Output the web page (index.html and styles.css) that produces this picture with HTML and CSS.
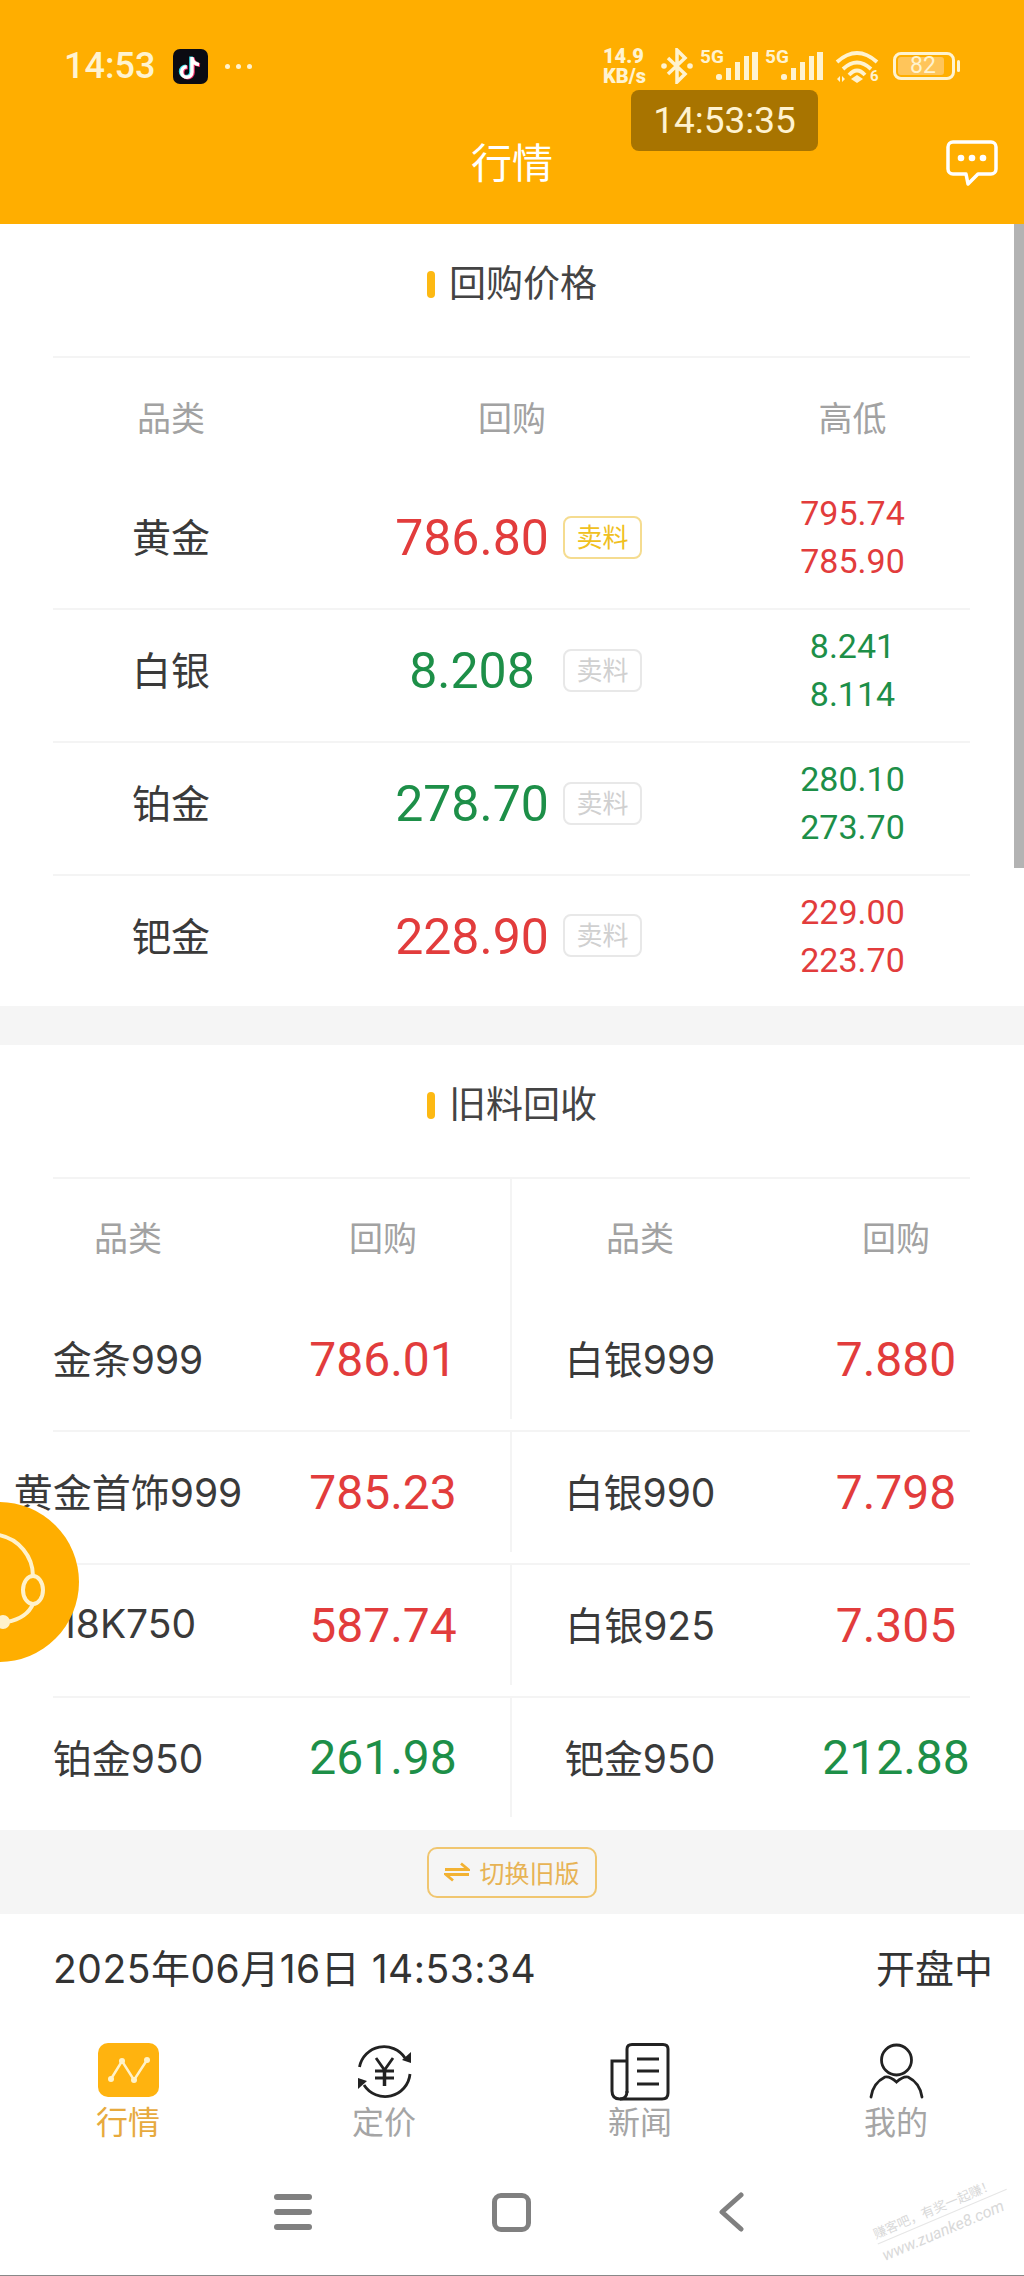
FILE: index.html
```html
<!DOCTYPE html>
<html lang="zh">
<head>
<meta charset="utf-8">
<title>行情</title>
<link rel="stylesheet" href="styles.css">
</head>
<body>
<div class="page">
  <header class="header">
    <div class="status">
      <span class="clock">14:53</span>
      <svg class="tiktok" viewBox="0 0 35 35">
        <rect width="35" height="35" rx="7" fill="#0b0b12"/>
        <path d="M19 8V23a5.2 5.2 0 1 1-5.2-5.2M19 9q1 6 7 6.500" fill="none" stroke="#38e0ea" stroke-width="3.600" transform="translate(-1 -.6)"/>
        <path d="M19 8V23a5.200 5.200 0 1 1-5.200-5.200M19 9q1 6 7 6.500" fill="none" stroke="#f5306a" stroke-width="3.600" transform="translate(1 .6)"/>
        <path d="M19 8V23a5.200 5.200 0 1 1-5.200-5.200M19 9q1 6 7 6.500" fill="none" stroke="#fff" stroke-width="3.400"/>
      </svg>
      <span class="dots"><i></i><i></i><i></i></span>
      <div class="status-right">
        <span class="speed"><b>14.9</b><b>KB/s</b></span>
        <svg class="bt" viewBox="0 0 33 36" fill="none" stroke="#fff3d0" stroke-width="3.500">
          <path d="M8 10 25 26 17 34V2L25 10 8 26"/>
          <circle cx="4" cy="18" r="2.800" fill="#fff3d0" stroke="none"/>
          <circle cx="30" cy="18" r="2.800" fill="#fff3d0" stroke="none"/>
        </svg>
        <div class="signal">
          <span class="sig-text">5G</span>
          <svg class="bars" viewBox="0 0 42 36">
            <g fill="#fff3d0"><rect x="0" y="26" width="6" height="6" rx="2.500"/><rect x="10" y="20" width="5" height="12"/><rect x="19" y="14" width="5" height="18"/><rect x="28" y="8" width="5" height="24"/><rect x="36" y="4" width="6" height="28"/></g>
          </svg>
        </div>
        <div class="signal">
          <span class="sig-text">5G</span>
          <svg class="bars" viewBox="0 0 42 36">
            <g fill="#fff3d0"><rect x="0" y="26" width="6" height="6" rx="2.500"/><rect x="10" y="20" width="5" height="12"/><rect x="19" y="14" width="5" height="18"/><rect x="28" y="8" width="5" height="24"/><rect x="36" y="4" width="6" height="28"/></g>
          </svg>
        </div>
        <div class="wifi">
          <svg class="wifi-arcs" viewBox="0 0 44 36" fill="none" stroke="#fff3d0" stroke-width="3.800">
            <path d="M2 14Q22-4 42 14M8 21Q22 8 36 21M14 27Q22 18 30 27"/>
            <path d="M16 31 22 27 28 31 22 35z" fill="#fff3d0" stroke="none"/>
            <path d="M2 31l3-3v6zM7 28l3 3-3 3z" fill="#fff3d0" stroke="none"/>
          </svg>
          <span class="wifi-text">6</span>
        </div>
        <div class="battery"><div class="battery-body"><span class="battery-fill">82</span></div><i class="battery-cap"></i></div>
      </div>
    </div>
    <div class="titlebar">
      <span></span>
      <h1 class="title">行情</h1>
      <svg class="chat" viewBox="0 0 52 46" fill="none" stroke="#fff" stroke-width="3.500" stroke-linejoin="round">
        <path d="M7 2H45a5 5 0 0 1 5 5V29a5 5 0 0 1-5 5H32L22 44 20 34H7a5 5 0 0 1-5-5V7a5 5 0 0 1 5-5z"/>
        <g fill="#fff" stroke="none"><circle cx="15" cy="18" r="3.300"/><circle cx="26" cy="18" r="3.300"/><circle cx="37" cy="18" r="3.300"/></g>
      </svg>
    </div>
    <div class="toast">14:53:35</div>
  </header>

  <section class="panel">
    <div class="section-title"><i class="section-bar"></i><h2>回购价格</h2></div>
    <div class="table">
      <div class="row3 head"><div>品类</div><div>回购</div><div>高低</div></div>
      <div class="row3 line">
        <div class="name">黄金</div>
        <div class="buy"><span class="price red">786.80</span><span class="tag active">卖料</span></div>
        <div class="range red"><span>795.74</span><span>785.90</span></div>
      </div>
      <div class="row3 line">
        <div class="name">白银</div>
        <div class="buy"><span class="price green">8.208</span><span class="tag">卖料</span></div>
        <div class="range green"><span>8.241</span><span>8.114</span></div>
      </div>
      <div class="row3 line">
        <div class="name">铂金</div>
        <div class="buy"><span class="price green">278.70</span><span class="tag">卖料</span></div>
        <div class="range green"><span>280.10</span><span>273.70</span></div>
      </div>
      <div class="row3 last">
        <div class="name">钯金</div>
        <div class="buy"><span class="price red">228.90</span><span class="tag">卖料</span></div>
        <div class="range red"><span>229.00</span><span>223.70</span></div>
      </div>
    </div>
  </section>

  <div class="gap"></div>

  <section class="panel">
    <div class="section-title"><i class="section-bar"></i><h2>旧料回收</h2></div>
    <div class="table">
      <div class="row4 head"><div>品类</div><div class="split">回购</div><div>品类</div><div>回购</div></div>
      <div class="row4 line">
        <div class="name">金条999</div><div class="split price2 red">786.01</div>
        <div class="name">白银999</div><div class="price2 red">7.880</div>
      </div>
      <div class="row4 line">
        <div class="name">黄金首饰999</div><div class="split price2 red">785.23</div>
        <div class="name">白银990</div><div class="price2 red">7.798</div>
      </div>
      <div class="row4 line">
        <div class="name">18K750</div><div class="split price2 red">587.74</div>
        <div class="name">白银925</div><div class="price2 red">7.305</div>
      </div>
      <div class="row4 last">
        <div class="name">铂金950</div><div class="split price2 green">261.98</div>
        <div class="name">钯金950</div><div class="price2 green">212.88</div>
      </div>
    </div>
  </section>

  <div class="switch-band">
    <div class="switch">
      <svg class="switch-icon" viewBox="0 0 26 20" fill="none" stroke="#f2b233" stroke-width="2.800">
        <path d="M1 7.500H24L17 1.500M25 12.500H2L9 18.500"/>
      </svg>
      <span>切换旧版</span>
    </div>
  </div>

  <div class="footer"><span class="footer-date">2025年06月16日 14:53:34</span><span>开盘中</span></div>

  <nav class="tabs">
    <div class="tab current">
      <svg class="tab-icon" viewBox="0 0 61 58">
        <rect width="61" height="54" rx="10" fill="#ffb30f"/>
        <path d="M13 36 24 18 36 37 49 17" fill="none" stroke="#fff2c8" stroke-width="2.500"/>
        <g fill="#fff2c8"><circle cx="13" cy="36" r="3"/><circle cx="24" cy="18" r="3"/><circle cx="36" cy="37" r="3"/><circle cx="49" cy="17" r="3"/></g>
      </svg>
      <span>行情</span>
    </div>
    <div class="tab">
      <svg class="tab-icon" viewBox="0 0 61 58" fill="none" stroke="#222" stroke-width="2.800">
        <path d="M5.500 24A25 25 0 0 1 51 15"/>
        <path d="M56 31A25 25 0 0 1 10 42"/>
        <path d="M57 9V20L48 17zM4 46V35L13 38z" fill="#222" stroke="none"/>
        <path d="M22 15 30.500 27 39 15M21 28H40M21 35H40"/>
        <path d="M30.500 27V43" stroke-width="3.500"/>
      </svg>
      <span>定价</span>
    </div>
    <div class="tab">
      <svg class="tab-icon" viewBox="0 0 61 58" fill="none" stroke="#222" stroke-width="3">
        <path d="M17 50V6Q17 1.500 22 1.500H53Q58 1.500 58 6V50Q58 56 52 56H10"/>
        <path d="M17 18H2V48Q2 56 10 56 17 56 17 48"/>
        <path d="M27 16H49M27 28H49M27 41H49"/>
      </svg>
      <span>新闻</span>
    </div>
    <div class="tab">
      <svg class="tab-icon" viewBox="0 0 61 58" fill="none" stroke="#222" stroke-width="2.800">
        <circle cx="30.500" cy="17" r="15"/>
        <path d="M5 54Q7 40 19 34 24 33 30.500 39 37 33 42 34 54 40 56 54" stroke-linecap="round"/>
      </svg>
      <span>我的</span>
    </div>
  </nav>

  <div class="sysnav">
    <div class="menu-icon"><i></i><i></i><i></i></div>
    <div class="home-icon"></div>
    <svg class="back-icon" viewBox="0 0 26 40" fill="none" stroke="#808080" stroke-width="5" stroke-linecap="round" stroke-linejoin="round"><path d="M23 3 4 20 23 37"/></svg>
  </div>

  <div class="scrollbar"></div>
  <div class="support">
    <svg class="support-icon" viewBox="0 0 80 160" fill="none" stroke="#fff2cc" stroke-width="4">
      <path d="M0 33A42 42 0 0 1 34 74"/>
      <ellipse cx="34" cy="88" rx="10" ry="14"/>
      <path d="M34 102Q28 116 8 120"/>
      <circle cx="4" cy="120" r="7" fill="#fff2cc" stroke="none"/>
    </svg>
  </div>
  <div class="watermark"><span class="wm-top">赚客吧，有奖一起赚！</span><span class="wm-bottom">www.zuanke8.com</span></div>
</div>
</body>
</html>
```
FILE: styles.css
```css
* { box-sizing: border-box; }
html, body { margin: 0; padding: 0; background: #fff; }
body { font-family: Inter, "Noto Sans CJK SC", sans-serif; color: #3a3a3a; }
h1, h2 { margin: 0; font-weight: 400; }
.page { position: relative; width: 1024px; height: 2276px; overflow: hidden; border-bottom: 1px solid #888; }

.header { position: relative; height: 224px; background: #ffae00; padding-top: 48px; }
.status { display: flex; align-items: center; height: 36px; padding: 0 64px 0 64px; color: #fff3d0; }
.clock { font: 500 36px Roboto, sans-serif; width: 91px; }
.tiktok { width: 35px; height: 35px; margin-left: 18px; }
.dots { display: flex; gap: 6px; margin-left: 17px; }
.dots i { width: 5px; height: 5px; border-radius: 50%; background: #fff3d0; }
.status-right { display: flex; align-items: center; margin-left: auto; }
.speed { display: flex; flex-direction: column; width: 47px; font: 700 20px/20px Roboto, sans-serif; }
.speed b { white-space: nowrap; }
.bt { width: 33px; height: 36px; margin-left: 10px; }
.signal { display: flex; align-items: flex-start; width: 58px; height: 36px; margin-left: 7px; }
.sig-text { width: 16px; height: 18px; font: 700 19px/18px Roboto, sans-serif; white-space: nowrap; color: #fff3d0; }
.bars { width: 42px; height: 36px; }
.wifi { display: flex; align-items: flex-end; width: 44px; height: 36px; margin-left: 12px; }
.wifi-arcs { width: 44px; height: 36px; flex: none; }
.wifi-text { flex: none; width: 9px; margin-left: -9px; font: 700 15px/15px Roboto, sans-serif; color: #fff3d0; }
.battery { display: flex; align-items: center; margin-left: 14px; }
.battery-body { width: 62px; height: 28px; border: 3px solid #fff3d0; border-radius: 8px; padding: 2px; }
.battery-fill { display: block; width: 46px; height: 18px; border-radius: 3px; background: #ffc55a; font: 23px/18px Roboto, sans-serif; text-align: center; padding-left: 4px; color: #fff3d0; }
.battery-cap { width: 3px; height: 12px; margin-left: 2px; background: #fff3d0; border-radius: 2px; }
.titlebar { display: grid; grid-template-columns: 1fr auto 1fr; align-items: center; height: 80px; margin-top: 39px; padding: 0 26px; }
.title { font-size: 41px; line-height: 80px; color: #fff; }
.chat { width: 52px; height: 46px; justify-self: end; }
.toast { position: absolute; left: 631px; top: 90px; width: 187px; height: 61px; border-radius: 8px; background: #a87400; color: #fff3d0; font: 37px/61px Roboto, sans-serif; text-align: center; }

.section-title { display: flex; align-items: center; justify-content: center; gap: 14px; height: 120px; margin-bottom: 12px; }
.section-bar { width: 8px; height: 27px; border-radius: 4px; background: #fdb913; }
.section-title h2 { font-size: 37px; line-height: 120px; color: #444; }

.table { margin: 0 54px 0 53px; border-top: 2px solid #f4f4f4; }
.row3, .row4 { display: grid; text-align: center; }
.row3 { grid-template-columns: 236px 1fr 235px; }
.row4 { grid-template-columns: 203px 256px 256px 202px; }
.row4 > :first-child { margin-left: -53px; }
.row4 > :last-child { margin-right: -54px; }
.head { height: 119px; align-items: center; padding-bottom: 3px; font-size: 34px; color: #a2a2a2; }
.row4.head { height: 120px; padding-bottom: 0; align-items: stretch; line-height: 120px; }
.line { height: 133px; border-bottom: 2px solid #f4f4f4; padding-bottom: 11px; }
.last { height: 130px; padding-bottom: 11px; }
.row4.last { height: 132px; padding-bottom: 13px; }
.line > div, .last > div { display: flex; align-items: center; justify-content: center; }
.name { font-size: 39px; padding-bottom: 4px; color: #3a3a3a; white-space: nowrap; }
.buy { gap: 11px; padding-left: 10px; }
.price { width: 160px; padding-top: 2px; font: 50px Roboto, sans-serif; text-align: center; }
.price2 { font: 48px Roboto, sans-serif; }
.red { color: #e23c3c; }
.green { color: #1d8f48; }
.split { border-right: 2px solid #f4f4f4; }
.tag { width: 79px; height: 43px; border: 2px solid #e8e8e8; border-radius: 8px; font-size: 26px; line-height: 39px; color: #d0d0d0; text-align: center; }
.tag.active { border-color: #f5dc90; color: #f0c020; }
.line > .range, .last > .range { flex-direction: column; font: 34px/48px Roboto, sans-serif; }

.gap { height: 39px; background: #f5f5f5; }
.switch-band { display: flex; justify-content: center; align-items: center; height: 84px; background: #f5f5f5; }
.switch { display: flex; align-items: center; justify-content: center; gap: 9px; width: 170px; height: 51px; border: 2px solid #f0c670; border-radius: 10px; font-size: 25px; color: #e7b355; }
.switch-icon { width: 26px; height: 20px; }

.footer { display: flex; justify-content: space-between; align-items: center; height: 110px; padding: 0 31px 7px 53px; font-size: 39px; color: #333; }
.footer-date { letter-spacing: .5px; }
.tabs { display: grid; grid-template-columns: repeat(4, 1fr); padding-top: 19px; }
.tab { display: flex; flex-direction: column; align-items: center; font-size: 32px; line-height: 44px; color: #a5a5a5; }
.tab.current { color: #e7aa3e; }
.tab-icon { display: block; width: 61px; height: 58px; }
.sysnav { display: flex; align-items: center; height: 40px; margin-top: 47px; padding-left: 274px; }
.menu-icon { display: flex; flex-direction: column; gap: 9px; width: 38px; }
.menu-icon i { height: 6px; border-radius: 3px; background: #808080; }
.home-icon { width: 39px; height: 39px; margin-left: 180px; border: 5px solid #808080; border-radius: 9px; }
.back-icon { width: 26px; height: 40px; margin-left: 187px; }

.scrollbar { position: absolute; right: 0; top: 224px; width: 10px; height: 644px; background: #b3b3b3; }
.support { position: absolute; left: -81px; top: 1502px; width: 160px; height: 160px; border-radius: 50%; background: #ffae00; overflow: hidden; }
.support-icon { display: block; width: 80px; height: 160px; margin-left: 80px; }
.watermark { position: absolute; left: 873px; top: 2198px; display: flex; flex-direction: column; gap: 4px; width: 140px; transform: rotate(-23deg); color: #d9d9d9; white-space: nowrap; }
.wm-top { font: 13px/15px "Noto Sans CJK SC", sans-serif; border-bottom: 1px solid #e6e6e6; padding-bottom: 3px; }
.wm-bottom { font: italic 16px/18px Roboto, sans-serif; }
```
